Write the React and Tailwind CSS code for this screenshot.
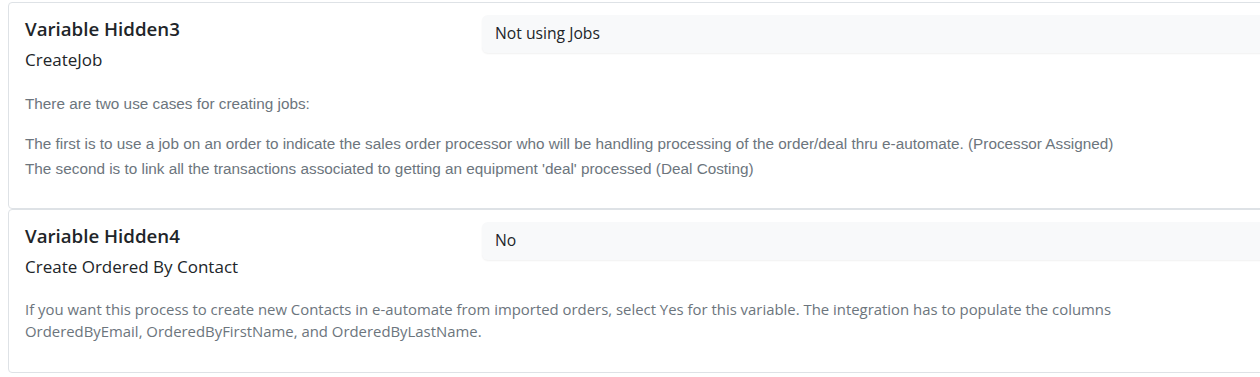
const segoe = "font-['Segoe_UI','Open_Sans',sans-serif]";

const VariableCard = ({ name, label, value, children, bottomPad }) => (
  <div className={`border border-[#dee2e6] rounded-[4px] pl-4 pt-3 ${bottomPad}`}>
    <div className="flex">
      <div className="w-[457px] shrink-0">
        <div className={`${segoe} text-[18.7px] leading-[27px] font-semibold text-[#212529]`}>{name}</div>
        <div className={`${segoe} text-[17px] leading-[24px] mt-[6px] text-[#212529]`}>{label}</div>
      </div>
      <div className="flex-1">
        <div className={`${segoe} h-[38px] flex items-center pl-[13px] bg-[#f8f9fa] rounded-l-[6px] shadow-[0_1px_2px_rgba(0,0,0,0.06)] text-[15.7px] text-[#212529]`}>
          {value}
        </div>
      </div>
    </div>
    <div className="mt-[19px]">{children}</div>
  </div>
);

export default function App() {
  return (
    <div className="w-full overflow-hidden bg-white pt-[2px] pl-2">
      <div className="-mr-4">
        <VariableCard name="Variable Hidden3" label="CreateJob" value="Not using Jobs" bottomPad="pb-[27px]">
          <div className="font-['Liberation_Sans',Arial,sans-serif] text-[15.3px] leading-[25px] text-[#6c757d]">
            <p className="mb-[15px]">There are two use cases for creating jobs:</p>
            <p>
              The first is to use a job on an order to indicate the sales order processor who will be handling processing of the order/deal thru e-automate. (Processor Assigned)
              <br />
              The second is to link all the transactions associated to getting an equipment 'deal' processed (Deal Costing)
            </p>
          </div>
        </VariableCard>
        <VariableCard name="Variable Hidden4" label="Create Ordered By Contact" value="No" bottomPad="pb-[30px]">
          <p className={`${segoe} text-[14.9px] leading-[22px] mt-px text-[#6c757d]`}>
            If you want this process to create new Contacts in e-automate from imported orders, select Yes for this variable. The integration has to populate the columns
            <br />
            OrderedByEmail, OrderedByFirstName, and OrderedByLastName.
          </p>
        </VariableCard>
      </div>
    </div>
  );
}
